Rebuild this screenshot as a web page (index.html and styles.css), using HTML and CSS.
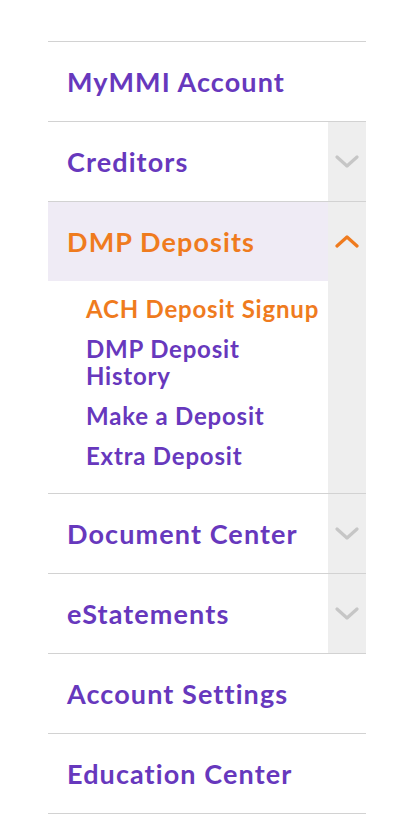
FILE: index.html
```html
<!DOCTYPE html>
<html>
<head>
<meta charset="utf-8">
<link rel="stylesheet" href="styles.css">
</head>
<body>
<nav class="menu">
  <div class="item"><a class="link">MyMMI Account</a></div>
  <div class="item has-toggle">
    <div class="main"><a class="link">Creditors</a></div>
    <div class="toggle"><svg class="chev" viewBox="0 0 24 14"><path d="M2 2 L12 11 L22 2"/></svg></div>
  </div>
  <div class="item has-toggle open">
    <div class="main">
      <a class="link active">DMP Deposits</a>
      <ul class="sub">
        <li><a class="active">ACH Deposit Signup</a></li>
        <li><a>DMP Deposit History</a></li>
        <li><a>Make a Deposit</a></li>
        <li><a>Extra Deposit</a></li>
      </ul>
    </div>
    <div class="toggle"><svg class="chev up" viewBox="0 0 24 14"><path d="M2 12 L12 3 L22 12"/></svg></div>
  </div>
  <div class="item has-toggle">
    <div class="main"><a class="link">Document Center</a></div>
    <div class="toggle"><svg class="chev" viewBox="0 0 24 14"><path d="M2 2 L12 11 L22 2"/></svg></div>
  </div>
  <div class="item has-toggle">
    <div class="main"><a class="link">eStatements</a></div>
    <div class="toggle"><svg class="chev" viewBox="0 0 24 14"><path d="M2 2 L12 11 L22 2"/></svg></div>
  </div>
  <div class="item"><a class="link">Account Settings</a></div>
  <div class="item"><a class="link">Education Center</a></div>
</nav>
</body>
</html>
```
FILE: styles.css
```css
html, body {
  margin: 0;
  padding: 0;
  background: #ffffff;
}
body {
  font-family: "Lato", "Liberation Sans", sans-serif;
}
.menu {
  margin: 41px 0 0 48px;
  width: 318px;
  border-top: 1px solid #d2d2d2;
}
.item {
  display: flex;
  border-bottom: 1px solid #d2d2d2;
}
.main {
  flex: 1;
  display: flex;
  flex-direction: column;
}
.link {
  display: flex;
  align-items: center;
  height: 79px;
  padding-left: 19px;
  font-size: 27px;
  font-weight: 700;
  color: #6738bd;
  letter-spacing: 1.1px;
}
.item > .link {
  flex: 1;
}
.link.active {
  color: #ef7b1e;
  background: #efebf5;
}
.toggle {
  width: 38px;
  background: #eeeeee;
  display: flex;
  justify-content: center;
  align-items: flex-start;
}
.chev {
  width: 24px;
  height: 14px;
  margin-top: 33px;
  fill: none;
  stroke: #c6c6c6;
  stroke-width: 3.2;
  stroke-linecap: round;
  stroke-linejoin: round;
}
.chev.up {
  stroke: #ef7b1e;
  margin-top: 32px;
}
.sub {
  list-style: none;
  margin: 0;
  padding: 14px 0 24px 38px;
  width: 242px;
  display: flex;
  flex-direction: column;
  gap: 13px;
}
.sub a {
  display: block;
  font-size: 24px;
  line-height: 27px;
  font-weight: 700;
  color: #6738bd;
  letter-spacing: 0.8px;
}
.sub a.active {
  color: #ef7b1e;
}
```
